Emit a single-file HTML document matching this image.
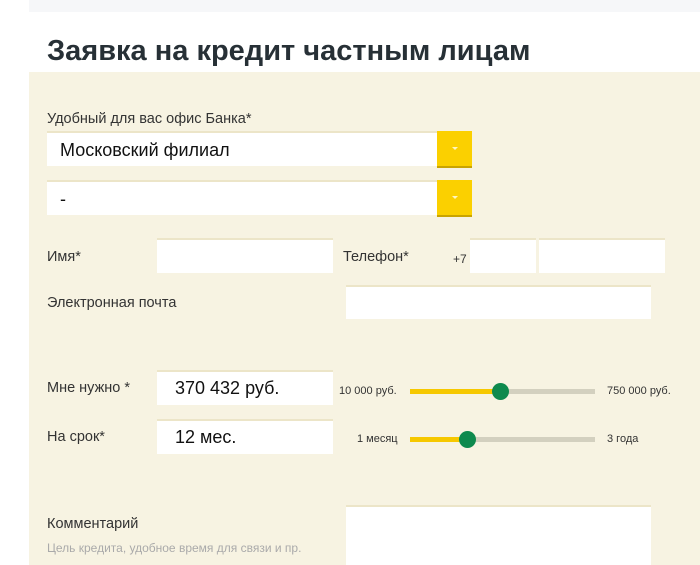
<!DOCTYPE html>
<html><head><meta charset="utf-8"><style>
body{margin:0;width:700px;height:565px;background:#fff;position:relative;overflow:hidden;font-family:"Liberation Sans",Arial,sans-serif;color:#333}
.a{position:absolute}
.top{left:29px;top:0;width:671px;height:12px;background:#f6f7f9}
.panel{left:29px;top:72px;width:671px;height:493px;background:#f7f3e2}
h1{position:absolute;left:47px;top:35px;margin:0;font-size:29px;font-weight:bold;color:#273036}
.lbl{font-size:14.5px;color:#333}
.in{background:#fff;border-top:2px solid #ece5c8;box-sizing:border-box}
.btn{background:#fbd000;border-bottom:2px solid #c9a400;box-sizing:border-box}
.btn:after{content:"";position:absolute;left:15px;top:16px;border:3px solid transparent;border-top:3px solid #fff6c0;border-bottom:0}
.v{font-size:18px;color:#111}
.track{height:5px;background:#d3d0bf}
.fill{height:5px;background:#f6c800}
.knob{width:17px;height:17px;border-radius:50%;background:#0e8a4e}
.s{font-size:11px;color:#333}
</style></head><body>
<div class="a top"></div>
<div class="a panel"></div>
<h1>Заявка на кредит частным лицам</h1>
<div class="a lbl" style="left:47px;top:111px">Удобный для вас офис Банка*</div>
<div class="a in" style="left:47px;top:131px;width:390px;height:35px"></div>
<div class="a v" style="left:60px;top:140px">Московский филиал</div>
<div class="a btn" style="left:437px;top:131px;width:35px;height:37px"></div>
<div class="a in" style="left:47px;top:180px;width:390px;height:35px"></div>
<div class="a v" style="left:60px;top:189px">-</div>
<div class="a btn" style="left:437px;top:180px;width:35px;height:37px"></div>

<div class="a lbl" style="left:47px;top:249px">Имя*</div>
<div class="a in" style="left:157px;top:238px;width:176px;height:35px"></div>
<div class="a lbl" style="left:343px;top:249px">Телефон*</div>
<div class="a" style="left:453px;top:252px;font-size:12px">+7</div>
<div class="a in" style="left:470px;top:238px;width:66px;height:35px"></div>
<div class="a in" style="left:539px;top:238px;width:126px;height:35px"></div>

<div class="a lbl" style="left:47px;top:295px">Электронная почта</div>
<div class="a in" style="left:346px;top:285px;width:305px;height:34px"></div>

<div class="a lbl" style="left:47px;top:380px">Мне нужно *</div>
<div class="a in" style="left:157px;top:370px;width:176px;height:35px"></div>
<div class="a v" style="left:175px;top:378px">370 432 руб.</div>
<div class="a s" style="left:339px;top:385px">10 000 руб.</div>
<div class="a track" style="left:410px;top:389px;width:185px"></div>
<div class="a fill" style="left:410px;top:389px;width:90px"></div>
<div class="a knob" style="left:492px;top:383px"></div>
<div class="a s" style="left:607px;top:385px">750 000 руб.</div>

<div class="a lbl" style="left:47px;top:429px">На срок*</div>
<div class="a in" style="left:157px;top:419px;width:176px;height:35px"></div>
<div class="a v" style="left:175px;top:427px">12 мес.</div>
<div class="a s" style="left:357px;top:433px">1 месяц</div>
<div class="a track" style="left:410px;top:437px;width:185px"></div>
<div class="a fill" style="left:410px;top:437px;width:57px"></div>
<div class="a knob" style="left:459px;top:431px"></div>
<div class="a s" style="left:607px;top:433px">3 года</div>

<div class="a lbl" style="left:47px;top:516px">Комментарий</div>
<div class="a" style="left:47px;top:541px;font-size:12px;color:#aaa">Цель кредита, удобное время для связи и пр.</div>
<div class="a in" style="left:346px;top:505px;width:305px;height:60px"></div>
</body></html>
